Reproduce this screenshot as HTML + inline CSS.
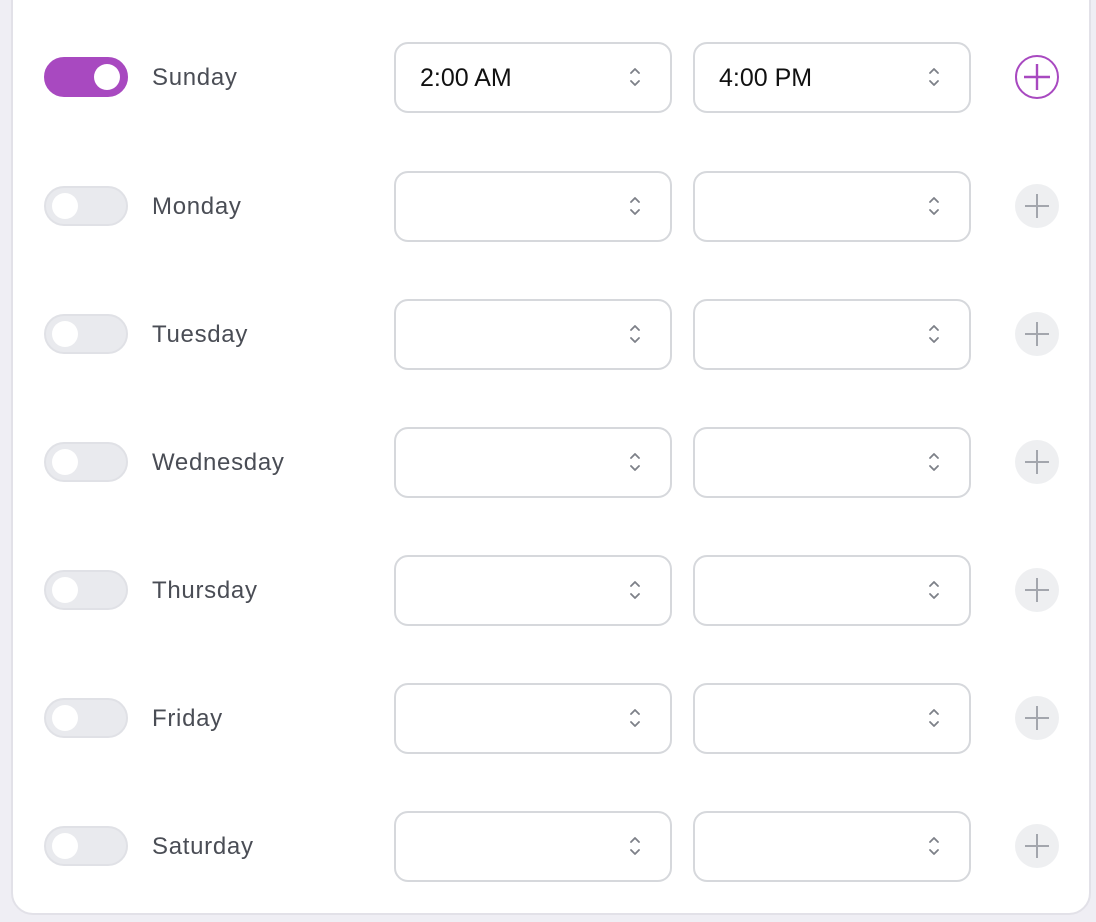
<!DOCTYPE html>
<html><head><style>
body{margin:0;width:1096px;height:922px;background:#efeef4;font-family:"Liberation Sans",sans-serif;position:relative;overflow:hidden}
.card{position:absolute;left:11px;top:-30px;width:1080px;height:945px;background:#fff;border:2px solid #e2e1e8;border-radius:22px;box-sizing:border-box}
.row{position:absolute;left:0;width:1096px;height:72px}
.tg{position:absolute;left:44px;top:16px;width:84px;height:40px;border-radius:20px;background:#e9eaee;box-sizing:border-box;border:2px solid #e0e1e6}
.tg i{position:absolute;left:6px;top:5px;width:26px;height:26px;border-radius:50%;background:#fff}
.tg.on{background:#a849c0;border-color:#a849c0}
.tg.on i{left:48px}
.lb{position:absolute;left:152px;top:23px;font-size:24px;color:#4a4d55;letter-spacing:0.7px}
.sel{position:absolute;top:1px;width:278px;height:71px;border:2px solid #d6d8dc;border-radius:14px;box-sizing:border-box;font-size:25px;color:#111;padding:20px 0 0 24px}
.sel svg{position:absolute;right:28px;top:22px}
.pl{position:absolute;left:1015px;top:14px;width:44px;height:44px;border-radius:50%;background:#eeeff1}
</style></head><body>
<div class="card"></div>
<div id="rows"></div>
<script>
var days=["Sunday","Monday","Tuesday","Wednesday","Thursday","Friday","Saturday"];
var ch='<svg width="14" height="22" viewBox="0 0 14 22"><path d="M3 7l4-4 4 4M3 15l4 4 4-4" fill="none" stroke="#7d8088" stroke-width="1.8" stroke-linecap="round" stroke-linejoin="round"/></svg>';
var h='';
days.forEach(function(d,i){
 var y=41+i*128+(i?1:0);var on=i==0;
 h+='<div class="row" style="top:'+y+'px"><div class="tg'+(on?' on':'')+'"><i></i></div><div class="lb">'+d+'</div>'+
 '<div class="sel" style="left:394px">'+(on?'2:00 AM':'')+ch+'</div>'+
 '<div class="sel" style="left:693px">'+(on?'4:00 PM':'')+ch+'</div>'+
 (on?'<svg style="position:absolute;left:1014px;top:13px" width="46" height="46" viewBox="0 0 46 46"><circle cx="23" cy="23" r="21" fill="none" stroke="#a849c0" stroke-width="2"/><path d="M23 10v26M10 23h26" stroke="#a849c0" stroke-width="2.4"/></svg>'
 :'<div class="pl"><svg width="44" height="44" viewBox="0 0 44 44"><path d="M22 10v24M10 22h24" stroke="#a3a6ad" stroke-width="2"/></svg></div>')+'</div>';
});
document.getElementById('rows').innerHTML=h;
</script>
</body></html>
